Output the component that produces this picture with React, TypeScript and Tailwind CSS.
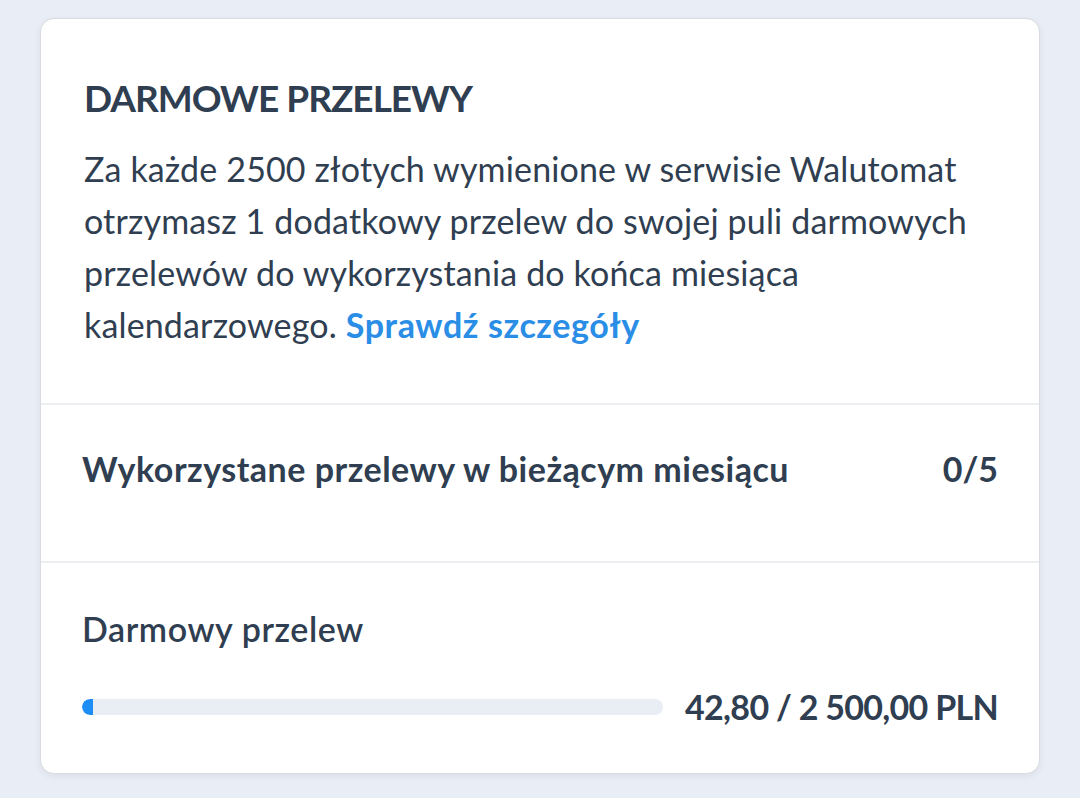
import React from "react";

export default function App() {
  const used = 42.8;
  const total = 2500;
  const pct = Math.max((used / total) * 100, 1.9);
  return (
    <div
      className="w-[1080px] h-[798px] bg-[#e9edf5] pt-[18px] pl-[40px]"
      style={{ fontFamily: "Lato, 'Noto Sans', sans-serif" }}
    >
      <div className="w-[1000px] h-[756px] bg-white rounded-[14px] border border-[#d9dde3] shadow-[0_2px_6px_rgba(40,60,90,0.08)] flex flex-col text-[#2f3e50]">
        <div className="pt-[56px] pb-[52px] pl-[43px] pr-[41px] border-b-2 border-[#eceef1]">
          <h2 className="text-[37px] leading-[46px] font-bold tracking-[-1px]">
            DARMOWE PRZELEWY
          </h2>
          <p className="mt-[22px] text-[34px] leading-[52px] tracking-[0.15px]">
            Za każde 2500 złotych wymienione w serwisie Walutomat
            <br />
            otrzymasz 1 dodatkowy przelew do swojej puli darmowych
            <br />
            przelewów do wykorzystania do końca miesiąca
            <br />
            kalendarzowego.{" "}
            <a className="text-[#2a8de6] font-bold tracking-[0.6px]">Sprawdź szczegóły</a>
          </p>
        </div>
        <div className="pt-[38px] pb-[66px] pl-[41px] pr-[41px] border-b-2 border-[#eceef1] flex justify-between text-[34px] leading-[52px] font-bold">
          <span className="tracking-[0.5px]">Wykorzystane przelewy w bieżącym miesiącu</span>
          <span>0/5</span>
        </div>
        <div className="pt-[40px] pl-[41px] pr-[41px] flex flex-col">
          <div className="text-[34px] leading-[52px] font-semibold tracking-[0.6px]">Darmowy przelew</div>
          <div className="mt-[26px] flex items-center gap-[22px]">
            <div className="flex-1 h-[16px] rounded-full bg-[#e9eef5] overflow-hidden">
              <div
                className="h-full bg-[#1e8ef5] rounded-l-full"
                style={{ width: `${pct}%` }}
              />
            </div>
            <span className="text-[34px] leading-[52px] font-bold whitespace-nowrap tracking-[-0.7px]">
              42,80 / 2 500,00 PLN
            </span>
          </div>
        </div>
      </div>
    </div>
  );
}
